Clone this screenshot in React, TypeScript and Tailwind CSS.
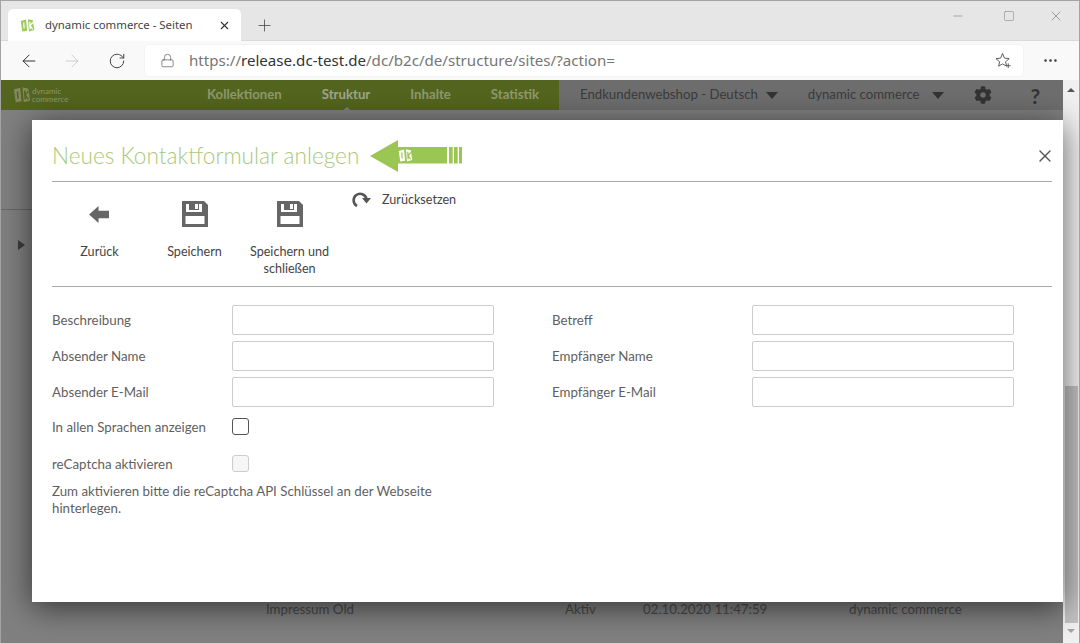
import { ArrowLeft, ArrowRight, Lock, Minus, Plus, RotateCw, Square, X, MoreHorizontal } from "lucide-react";
import { FaCog } from "react-icons/fa";

const navItems = [
  { label: "Kollektionen", active: false },
  { label: "Struktur", active: true },
  { label: "Inhalte", active: false },
  { label: "Statistik", active: false },
];

const leftFields = ["Beschreibung", "Absender Name", "Absender E-Mail"];
const rightFields = ["Betreff", "Empfänger Name", "Empfänger E-Mail"];

const Logo = ({ color, cut, className }: { color: string; cut: string; className: string }) => (
  <svg viewBox="0 0 20 20" className={className}>
    <path d="M1 4 L8 2 L9.5 17 L3 18 Z" fill={color} />
    <path d="M10.5 1.5 L17 3 L19 16 L12 18 Z" fill={color} />
    <path d="M5 6 L5.5 14 M13 5 L13.5 15 M13.5 10 L17 6 M13.5 10 L17 15" stroke={cut} strokeWidth="1.6" fill="none" />
  </svg>
);

const FloppyIcon = () => (
  <svg viewBox="0 0 28 28" className="h-7 w-7">
    <path
      fillRule="evenodd"
      fill="#666666"
      d="M1 1 H23 L27 5 V27 H1 Z M5 4 V12 H21 V4 H18 V10 H8 V4 Z M4.5 16 V24 H23.5 V16 Z M14 4 H17 V9 H14 Z"
    />
  </svg>
);

const BackIcon = () => (
  <svg viewBox="0 0 22 20" className="h-[19px] w-[21px]">
    <path fill="#666666" d="M0 10 L10 1 V6 H21 V14 H10 V19 Z" />
  </svg>
);

const ResetIcon = () => (
  <svg viewBox="0 0 20 18" className="h-[18px] w-[20px]">
    <path d="M5 15 A6.5 6.5 0 1 1 14.5 8" fill="none" stroke="#555555" strokeWidth="2.6" />
    <path d="M10 7 H19 L14.5 12.5 Z" fill="#555555" />
  </svg>
);

const ToolButton = ({ icon, label }: { icon: React.ReactNode; label: React.ReactNode }) => (
  <div className="flex w-[95px] flex-col items-center">
    <div className="flex h-7 items-center">{icon}</div>
    <div className="mt-[15px] text-center text-[12.6px] leading-[17px] text-[#444444]">{label}</div>
  </div>
);

const Field = ({ label, labelWidth }: { label: string; labelWidth: string }) => (
  <div className="flex h-[30px] items-center">
    <div className={`${labelWidth} pt-[1px] text-[13.3px] text-[#5f5f5f]`}>{label}</div>
    <div className="h-[30px] w-[262px] rounded-[2px] border border-[#cccccc] bg-white" />
  </div>
);

const App = () => {
  return (
    <div className="relative flex h-[643px] w-[1080px] flex-col overflow-hidden border-x border-[#a3a3a3] bg-white font-['Lato','Noto_Sans',sans-serif]">
      {/* tab strip */}
      <div className="flex h-[41px] shrink-0 border-y border-[#a3a3a3] border-b-[#d9d9d9] bg-[#e6e6e6] font-['Noto_Sans',sans-serif]">
        <div className="mt-[8px] ml-[7px] flex h-[32px] w-[233px] items-center rounded-t-[5px] bg-white pl-[12px] pr-[10px]">
          <Logo color="#9ccb5a" cut="#ffffff" className="h-[15px] w-[15px]" />
          <span className="ml-[10px] flex-1 text-[11.4px] text-[#444444]">dynamic commerce - Seiten</span>
          <X size={13} className="text-[#333333]" />
        </div>
        <Plus size={19} strokeWidth={1} className="mt-[15px] ml-[14px] text-[#444444]" />
        <div className="ml-auto flex items-start pt-[7px] pr-[15px] text-[#777777]">
          <Minus size={14} strokeWidth={1} className="mt-[1px]" />
          <Square size={12} strokeWidth={1} className="mt-[2px] ml-[38px]" />
          <X size={16} strokeWidth={1} className="ml-[33px]" />
        </div>
      </div>
      {/* address bar */}
      <div className="flex h-[39px] shrink-0 items-center bg-[#f9f9f9] font-['Noto_Sans',sans-serif]">
        <ArrowLeft size={20} strokeWidth={1.2} className="ml-[18px] text-[#333333]" />
        <ArrowRight size={20} strokeWidth={1} className="ml-[23px] text-[#c4c4c4]" />
        <RotateCw size={18} strokeWidth={1.2} className="ml-[26px] text-[#333333]" />
        <div className="ml-[19px] flex h-[31px] w-[878px] items-center rounded-[4px] bg-white pl-[15px] shadow-[0_0_2px_rgba(0,0,0,0.08)]">
          <Lock size={15} strokeWidth={1.1} className="text-[#555555]" />
          <div className="ml-[14px] flex-1 text-[15.1px] text-[#767676]">
            https://<span className="text-[#333333]">release.dc-test.de</span>/dc/b2c/de/structure/sites/?action=
          </div>
          <svg viewBox="0 0 18 18" className="mr-[11px] h-[17px] w-[17px]" fill="none" stroke="#555555" strokeWidth="1">
            <path d="M8 1.5 L10 6.5 L15 7 L11.2 10.4 L12.3 15 L8 12.6 L3.8 15 L4.9 10.4 L1 7 L6 6.5 Z" />
            <path d="M14 12 V17 M11.5 14.5 H16.5" />
          </svg>
        </div>
        <MoreHorizontal size={17} strokeWidth={1.6} className="ml-[19px] text-[#333333]" />
      </div>
      {/* page under the dialog backdrop */}
      <div className="flex min-h-0 flex-1">
        <div className="relative min-w-0 flex-1 bg-[#808080]">
          <div className="flex h-[30px] items-center bg-[#6e6e6e]">
            <div className="flex h-full w-[558px] items-center bg-[#54651f]">
              <Logo color="#85885f" cut="#54651f" className="ml-[12px] h-[18px] w-[18px]" />
              <div className="ml-[1px] w-[45px] text-[8px] leading-[8px] text-[#8d9670]">
                dynamic
                <br />
                commerce
              </div>
              <div className="ml-[130px] flex gap-[40px]">
                {navItems.map((item) => (
                  <div
                    key={item.label}
                    className={`relative text-[13.2px] font-bold ${item.active ? "text-[#a0a58e]" : "text-[#8f9a6d]"}`}
                  >
                    {item.label}
                    {item.active && (
                      <div className="absolute -bottom-[6px] left-[20px] h-0 w-0 border-x-[5px] border-b-[4px] border-x-transparent border-b-[#7f7f7f]" />
                    )}
                  </div>
                ))}
              </div>
            </div>
            <div className="ml-[21px] flex items-center text-[13.2px] text-[#3b3b3b]">
              Endkundenwebshop - Deutsch
              <div className="ml-[8px] h-0 w-0 border-x-[6px] border-t-[7px] border-x-transparent border-t-[#333333]" />
              <span className="ml-[30px]">dynamic commerce</span>
              <div className="ml-[12px] h-0 w-0 border-x-[6px] border-t-[7px] border-x-transparent border-t-[#333333]" />
              <FaCog size={18} className="ml-[30px] text-[#333333]" />
              <span className="ml-[39px] text-[21px] leading-none font-bold text-[#333333]">?</span>
            </div>
          </div>
          <div className="h-[100px] border-b border-[#666666]" />
          <div className="mt-[30px] ml-[17px] h-0 w-0 border-y-[5px] border-l-[7px] border-y-transparent border-l-[#3d3d3d]" />
          {/* row showing under the dialog */}
          <div className="absolute top-[520px] left-[265px] flex text-[13.3px] text-[#4a4a4a]">
            <span className="w-[299px]">Impressum Old</span>
            <span className="w-[78px]">Aktiv</span>
            <span className="w-[206px]">02.10.2020 11:47:59</span>
            <span>dynamic commerce</span>
          </div>
        </div>
        {/* scrollbar */}
        <div className="flex w-[16px] shrink-0 flex-col items-center bg-[#f0f0f0]">
          <div className="mt-[8px] h-0 w-0 border-x-[4px] border-b-[4px] border-x-transparent border-b-[#555555]" />
          <div className="mt-[294px] h-[237px] w-[13px] bg-[#c1c1c1]" />
          <div className="mt-[6px] h-0 w-0 border-x-[4px] border-t-[4px] border-x-transparent border-t-[#a3a3a3]" />
        </div>
      </div>
      {/* dialog */}
      <div className="absolute top-[120px] left-[31px] h-[482px] w-[1031px] bg-white pr-[11px] pl-[20px] shadow-[0_5px_30px_rgba(0,0,0,0.6)]">
        <div className="flex h-[62px] items-center border-b border-[#aaaaaa] pt-[10px]">
          <h1 className="text-[22.6px] font-light text-[#a7c97c]">Neues Kontaktformular anlegen</h1>
          <svg viewBox="0 0 92 32" className="ml-[11px] h-[32px] w-[92px]">
            <path fill="#9cc653" d="M0 16 L28 0 V7 H77 V23.5 H28 V32 Z" />
            <rect x="79" y="7" width="3.7" height="16.5" fill="#9cc653" />
            <rect x="84" y="7" width="3.7" height="16.5" fill="#9cc653" />
            <rect x="89" y="7" width="3" height="16.5" fill="#9cc653" />
            <g transform="translate(28 8) scale(0.75)">
              <path d="M1 4 L8 2 L9.5 17 L3 18 Z" fill="#ffffff" />
              <path d="M10.5 1.5 L17 3 L19 16 L12 18 Z" fill="#ffffff" />
              <path d="M5 6 L5.5 14 M13 5 L13.5 15 M13.5 10 L17 6 M13.5 10 L17 15" stroke="#9cc653" strokeWidth="1.6" fill="none" />
            </g>
          </svg>
          <X size={20} strokeWidth={1.6} className="mr-[-3px] ml-auto text-[#555555]" />
        </div>
        <div className="flex h-[105px] border-b border-[#aaaaaa]">
          <div className="flex pt-[18px]">
            <ToolButton icon={<BackIcon />} label="Zurück" />
            <ToolButton icon={<FloppyIcon />} label="Speichern" />
            <ToolButton
              icon={<FloppyIcon />}
              label={
                <>
                  Speichern und
                  <br />
                  schließen
                </>
              }
            />
          </div>
          <div className="ml-[15px] flex h-fit items-center pt-[9px]">
            <ResetIcon />
            <span className="ml-[10px] text-[12.6px] text-[#444444]">Zurücksetzen</span>
          </div>
        </div>
        <div className="mt-[18px] grid grid-cols-[500px_1fr]">
          <div className="flex flex-col gap-[6px]">
            {leftFields.map((f) => (
              <Field key={f} label={f} labelWidth="w-[180px]" />
            ))}
          </div>
          <div className="flex flex-col gap-[6px]">
            {rightFields.map((f) => (
              <Field key={f} label={f} labelWidth="w-[200px]" />
            ))}
          </div>
        </div>
        <div className="mt-[8px] flex items-center">
          <div className="w-[180px] pt-[3px] text-[13.3px] text-[#5f5f5f]">In allen Sprachen anzeigen</div>
          <div className="h-[17px] w-[17px] rounded-[3px] border border-[#555555] bg-white" />
        </div>
        <div className="mt-[15px] flex items-center">
          <div className="w-[180px] pt-[2px] text-[13.3px] text-[#5f5f5f]">reCaptcha aktivieren</div>
          <div className="h-[17px] w-[17px] rounded-[3px] border border-[#cccccc] bg-[#f6f6f6]" />
        </div>
        <p className="mt-[8px] w-[400px] text-[13.3px] leading-[17px] text-[#5f5f5f]">
          Zum aktivieren bitte die reCaptcha API Schlüssel an der Webseite hinterlegen.
        </p>
      </div>
    </div>
  );
};

export default App;
